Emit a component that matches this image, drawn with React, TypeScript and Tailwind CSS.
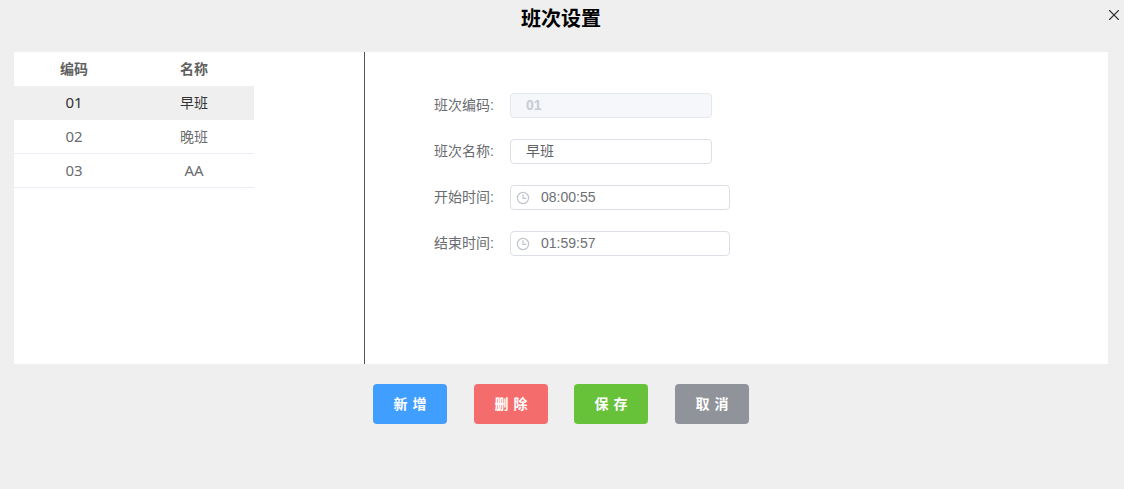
import React from 'react';
import { X } from 'lucide-react';

const rows = [
  { code: '01', name: '早班', active: true },
  { code: '02', name: '晚班', active: false },
  { code: '03', name: 'AA', active: false },
];

const Clock = () => (
  <svg width="14" height="14" viewBox="0 0 14 14" fill="none" stroke="#c0c4cc" strokeWidth="1.2" className="shrink-0">
    <circle cx="7" cy="7" r="5.6" />
    <path d="M7 3.2V7.4H10.4" />
  </svg>
);

const FormRow = ({ label, children }: { label: string; children: React.ReactNode }) => (
  <div className="flex h-[25px] items-center">
    <label className="w-[145px] pr-[16px] text-right text-[14px] text-[#6a6c70]">{label}:</label>
    {children}
  </div>
);

const TimeInput = ({ value }: { value: string }) => (
  <div className="flex h-[25px] w-[220px] items-center rounded border border-[#dcdfe6] bg-white pl-[5px] text-[14px] text-[#6e7074]">
    <Clock />
    <span className="ml-[11px]">{value}</span>
  </div>
);

const buttons = [
  { text: '新 增', cls: 'bg-[#409eff]' },
  { text: '删 除', cls: 'ml-[27px] bg-[#f56c6c]' },
  { text: '保 存', cls: 'ml-[26px] bg-[#67c23a]' },
  { text: '取 消', cls: 'ml-[27px] bg-[#909399]' },
];

export default function App() {
  return (
    <div
      className="relative h-[489px] w-[1124px] overflow-hidden bg-[#efefef] px-[14px]"
      style={{ fontFamily: '"Liberation Sans", "Noto Sans CJK SC", sans-serif' }}
    >
      <h1 className="h-[52px] pt-[5px] pr-[2px] text-center text-[20px] leading-[28px] font-bold text-black">班次设置</h1>
      <button className="absolute top-[6px] left-[1105px] text-[#333]" aria-label="close">
        <X className="h-[18px] w-[18px]" strokeWidth={1.5} />
      </button>

      <div className="flex h-[312px] w-[1094px] bg-white">
        {/* left list */}
        <div className="h-full w-[351px] border-r border-[#555]">
          <table
            className="w-[240px] table-fixed border-separate border-spacing-0 text-center text-[14px]"
            style={{ fontFamily: '"Noto Sans", "Noto Sans CJK SC", sans-serif' }}
          >
            <thead>
              <tr className="h-[34px] text-[#606060]">
                <th className="w-[120px] pb-[2px] font-bold">编码</th>
                <th className="w-[120px] pb-[2px] font-bold">名称</th>
              </tr>
            </thead>
            <tbody>
              {rows.map((row) => (
                <tr key={row.code} className={row.active ? 'bg-[#efefef] text-[#333]' : 'text-[#6a6c70]'}>
                  <td className={row.active ? 'h-[34px] pb-[2px] text-[15px]' : 'h-[34px] border-b border-[#ebeef5] text-[15px]'}>
                    {row.code}
                  </td>
                  <td className={row.active ? 'h-[34px] pb-[2px]' : row.name === 'AA' ? 'h-[34px] border-b border-[#ebeef5] text-[15px]' : 'h-[34px] border-b border-[#ebeef5]'}>
                    {row.name}
                  </td>
                </tr>
              ))}
            </tbody>
          </table>
        </div>

        {/* right form */}
        <div className="flex flex-col gap-[21px] pt-[41px]">
          <FormRow label="班次编码">
            <div className="flex h-[25px] w-[202px] items-center rounded border border-[#e4e7ed] bg-[#f5f7fa] pl-[15px] text-[14px] font-bold text-[#c8cbd2]">
              01
            </div>
          </FormRow>
          <FormRow label="班次名称">
            <div className="flex h-[25px] w-[202px] items-center rounded border border-[#dcdfe6] bg-white pl-[15px] text-[14px] text-[#606266]">
              早班
            </div>
          </FormRow>
          <FormRow label="开始时间">
            <TimeInput value="08:00:55" />
          </FormRow>
          <FormRow label="结束时间">
            <TimeInput value="01:59:57" />
          </FormRow>
        </div>
      </div>

      {/* actions */}
      <div className="mt-[20px] flex pl-[359px]">
        {buttons.map((b) => (
          <button
            key={b.text}
            className={`h-[40px] w-[74px] rounded text-[14px] font-bold whitespace-pre text-white [word-spacing:1px] ${b.cls}`}
          >
            {b.text}
          </button>
        ))}
      </div>
    </div>
  );
}
